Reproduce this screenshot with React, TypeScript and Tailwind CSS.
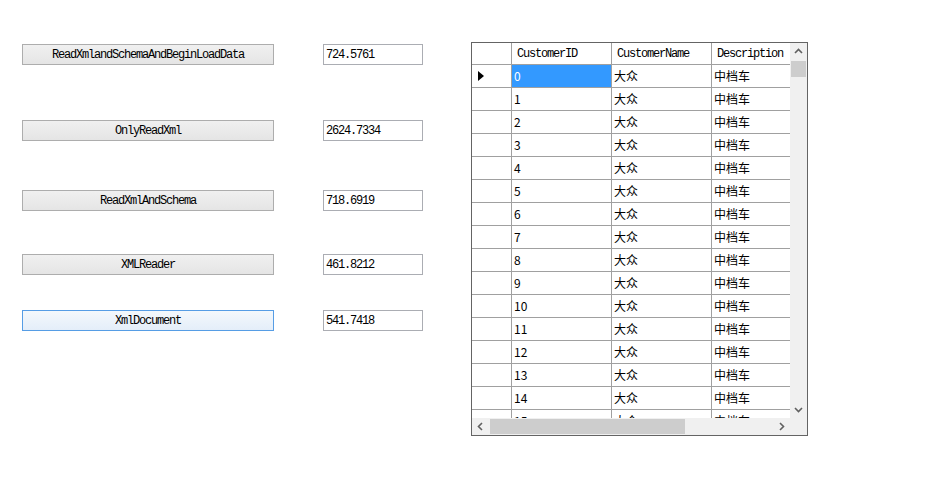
import React from "react";

const rows = [
  { label: "ReadXmlandSchemaAndBeginLoadData", value: "724.5761", mt: "mt-[44px]", focus: false },
  { label: "OnlyReadXml", value: "2624.7334", mt: "mt-[55px]", focus: false },
  { label: "ReadXmlAndSchema", value: "718.6919", mt: "mt-[49px]", focus: false },
  { label: "XMLReader", value: "461.8212", mt: "mt-[43px]", focus: false },
  { label: "XmlDocument", value: "541.7418", mt: "mt-[35px]", focus: true },
];

const mono = "font-['Liberation_Mono','DejaVu_Sans_Mono',monospace] text-[12px] tracking-[-1.2px]";
const cjk = "font-['Noto_Sans_CJK_SC','Noto_Sans',sans-serif] text-[12px]";

function Chevron({ dir }: { dir: "up" | "down" | "left" | "right" }) {
  const paths = {
    up: "M1 6 L4.5 2.5 L8 6",
    down: "M1 3 L4.5 6.5 L8 3",
    left: "M6 1 L2.5 4.5 L6 8",
    right: "M3 1 L6.5 4.5 L3 8",
  };
  return (
    <svg width="9" height="9" viewBox="0 0 9 9">
      <path d={paths[dir]} fill="none" stroke="#606060" strokeWidth="1.6" />
    </svg>
  );
}

function DataGrid() {
  const data = Array.from({ length: 16 }, (_, i) => i);
  return (
    <div className="mt-[42px] flex h-[394px] w-[337px] flex-col border border-[#646464] bg-[#ababab]">
      <div className="flex h-[375px]">
        <div className="w-[318px] overflow-hidden bg-white">
          <div className="flex h-[22px] border-b border-[#a0a0a0]">
            <div className="w-[40px] shrink-0 border-r border-[#a0a0a0]" />
            {["CustomerID", "CustomerName", "Description"].map((h) => (
              <div
                key={h}
                className={`flex w-[100px] shrink-0 items-center border-r border-[#a0a0a0] pl-[5px] text-black ${mono}`}
              >
                {h}
              </div>
            ))}
          </div>
          {data.map((i) => (
            <div key={i} className="flex h-[23px] border-b border-[#a0a0a0]">
              <div className="flex w-[40px] shrink-0 items-center border-r border-[#a0a0a0] pl-[6px]">
                {i === 0 && (
                  <svg width="6" height="10" viewBox="0 0 6 10">
                    <path d="M0 0 L6 5 L0 10 Z" fill="#000" />
                  </svg>
                )}
              </div>
              <div
                className={`flex w-[100px] shrink-0 items-center border-r border-[#a0a0a0] pl-[2px] ${cjk} ${
                  i === 0 ? "bg-[#3399ff] text-white" : "text-black"
                }`}
              >
                {i}
              </div>
              <div className={`flex w-[100px] shrink-0 items-center border-r border-[#a0a0a0] pl-[2px] text-black ${cjk}`}>
                大众
              </div>
              <div className={`flex w-[100px] shrink-0 items-center border-r border-[#a0a0a0] pl-[2px] text-black ${cjk}`}>
                中档车
              </div>
            </div>
          ))}
        </div>
        <div className="flex w-[17px] flex-col bg-[#f0f0f0]">
          <div className="flex h-[17px] items-center justify-center">
            <Chevron dir="up" />
          </div>
          <div className="flex-1 px-[1px] pt-[1px]">
            <div className="h-[16px] bg-[#cdcdcd]" />
          </div>
          <div className="flex h-[17px] items-center justify-center">
            <Chevron dir="down" />
          </div>
        </div>
      </div>
      <div className="flex h-[17px]">
        <div className="flex w-[318px] bg-[#f0f0f0]">
          <div className="flex w-[17px] items-center justify-center">
            <Chevron dir="left" />
          </div>
          <div className="flex-1 py-[1px] pl-[1px]">
            <div className="h-full w-[195px] bg-[#cdcdcd]" />
          </div>
          <div className="flex w-[17px] items-center justify-center">
            <Chevron dir="right" />
          </div>
        </div>
        <div className="w-[17px] bg-[#f0f0f0]" />
      </div>
    </div>
  );
}

export default function App() {
  return (
    <div className="flex h-[483px] w-[941px] bg-white">
      <div className="flex w-[471px] shrink-0 flex-col pl-[22px]">
        {rows.map((r) => (
          <div key={r.label} className={`flex h-[21px] items-center ${r.mt}`}>
            <div
              className={`flex h-[21px] w-[252px] items-center justify-center border bg-gradient-to-b ${
                r.focus
                  ? "border-[#569de5] from-[#f4f8fc] to-[#e4eef9]"
                  : "border-[#adadad] from-[#f0f0f0] to-[#e5e5e5]"
              } text-black ${mono}`}
            >
              {r.label}
            </div>
            <div
              className={`ml-[49px] flex h-[21px] w-[100px] items-center border border-[#abadb3] bg-white pl-[2px] text-black ${mono}`}
            >
              {r.value}
            </div>
          </div>
        ))}
      </div>
      <DataGrid />
    </div>
  );
}
